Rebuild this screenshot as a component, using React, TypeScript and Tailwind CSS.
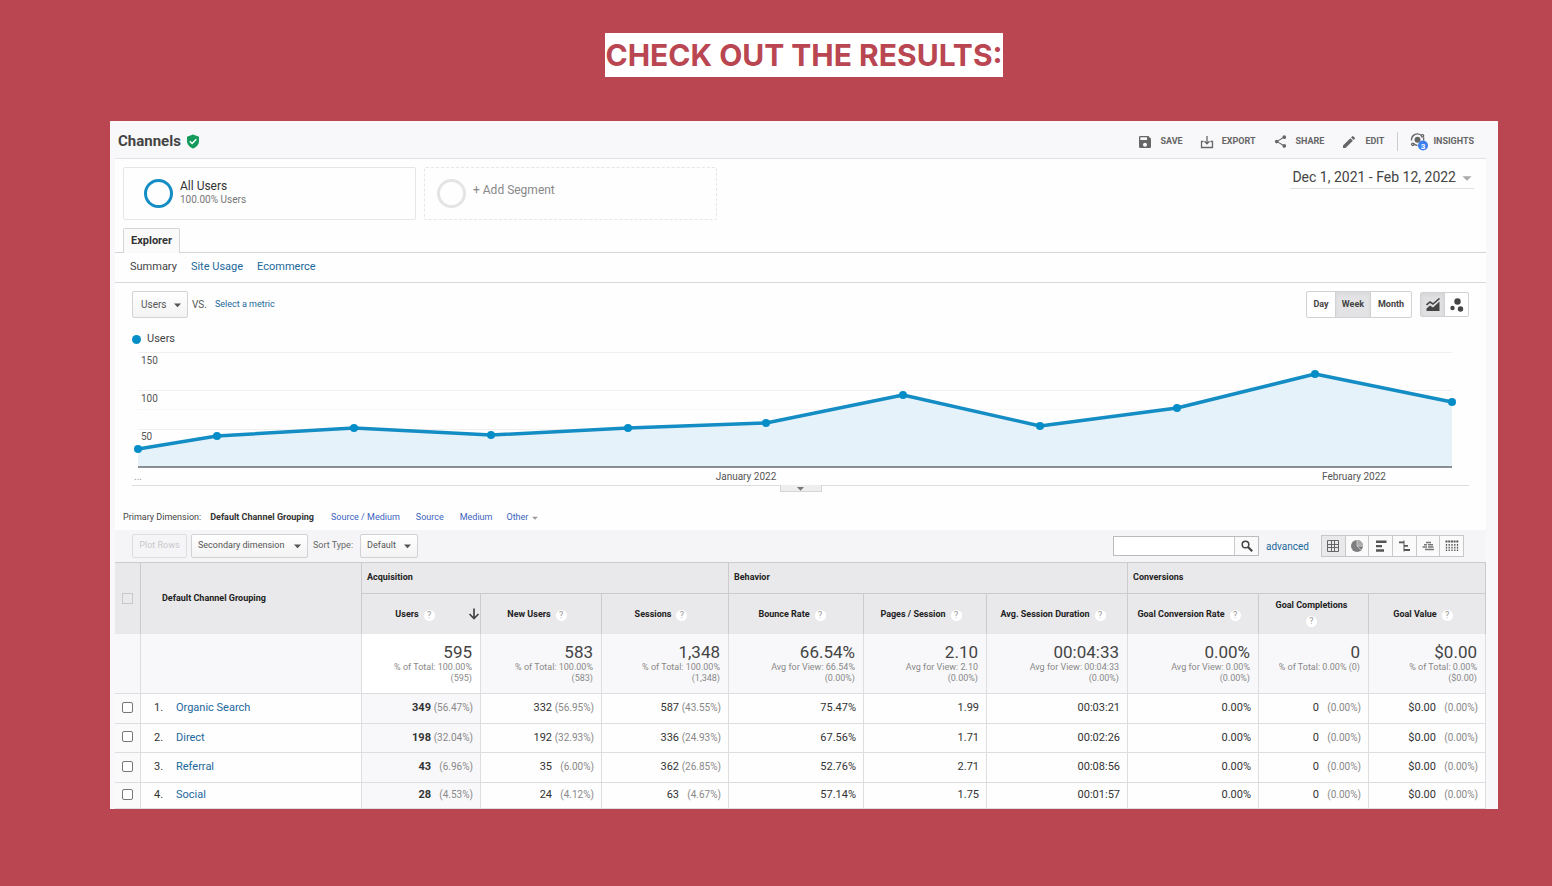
import type { ReactNode } from 'react';
import { MdSave, MdShare, MdEdit, MdArrowDropDown } from 'react-icons/md';

const points = [
  [6, 101], [85, 88], [222, 80], [359, 87], [496, 80], [634, 75],
  [771, 47], [908, 78], [1045, 60], [1183, 26], [1320, 54],
];
const line = points.map((p) => p.join(',')).join(' ');

const columns = [
  { label: 'Users', total: '595', note: '% of Total: 100.00%', sub: '(595)', sorted: true },
  { label: 'New Users', total: '583', note: '% of Total: 100.00%', sub: '(583)' },
  { label: 'Sessions', total: '1,348', note: '% of Total: 100.00%', sub: '(1,348)' },
  { label: 'Bounce Rate', total: '66.54%', note: 'Avg for View: 66.54%', sub: '(0.00%)' },
  { label: 'Pages / Session', total: '2.10', note: 'Avg for View: 2.10', sub: '(0.00%)' },
  { label: 'Avg. Session Duration', total: '00:04:33', note: 'Avg for View: 00:04:33', sub: '(0.00%)' },
  { label: 'Goal Conversion Rate', total: '0.00%', note: 'Avg for View: 0.00%', sub: '(0.00%)' },
  { label: 'Goal Completions', total: '0', note: '% of Total: 0.00% (0)', sub: '', stacked: true },
  { label: 'Goal Value', total: '$0.00', note: '% of Total: 0.00%', sub: '($0.00)' },
];

// Each cell is [value] or [value, share of total]
const rows = [
  { name: 'Organic Search', cells: [['349', '(56.47%)'], ['332', '(56.95%)'], ['587', '(43.55%)'], ['75.47%'], ['1.99'], ['00:03:21'], ['0.00%'], ['0', '(0.00%)'], ['$0.00', '(0.00%)']] },
  { name: 'Direct', cells: [['198', '(32.04%)'], ['192', '(32.93%)'], ['336', '(24.93%)'], ['67.56%'], ['1.71'], ['00:02:26'], ['0.00%'], ['0', '(0.00%)'], ['$0.00', '(0.00%)']] },
  { name: 'Referral', cells: [['43', '(6.96%)'], ['35', '(6.00%)'], ['362', '(26.85%)'], ['52.76%'], ['2.71'], ['00:08:56'], ['0.00%'], ['0', '(0.00%)'], ['$0.00', '(0.00%)']] },
  { name: 'Social', cells: [['28', '(4.53%)'], ['24', '(4.12%)'], ['63', '(4.67%)'], ['57.14%'], ['1.75'], ['00:01:57'], ['0.00%'], ['0', '(0.00%)'], ['$0.00', '(0.00%)']] },
];

function ShieldIcon() {
  return (
    <svg width="14" height="15" viewBox="0 0 14 15" aria-hidden="true">
      <path d="M7 0.500 13 2.700V7c0 3.600-2.500 6.200-6 7.500C3.500 13.200 1 10.600 1 7V2.700Z" fill="#149a5b" />
      <path d="m3.800 7.300 2.300 2.200 4.200-4.200" fill="none" stroke="#fff" strokeWidth="1.500" />
    </svg>
  );
}

function ExportIcon() {
  return (
    <svg width="14" height="14" viewBox="0 0 14 14" fill="none" stroke="#666" strokeWidth="1.300" aria-hidden="true">
      <path d="M3.500 6.500H1.500v6h11v-6H10.500M7 1v7.500M4.500 6.300 7 8.800 9.500 6.300" />
    </svg>
  );
}

function InsightsIcon() {
  return (
    <svg width="19" height="19" viewBox="0 0 19 19" aria-hidden="true">
      <g fill="none" stroke="#666" strokeWidth="1.300">
        <path d="M1.500 8.500A6 6 0 0 1 11.200 3.200M3.800 11.800A6 6 0 0 0 7.500 13.500M13.500 5.500a6 6 0 0 1 0 3" />
        <circle cx="12.500" cy="3.800" r="1.200" />
        <circle cx="2.800" cy="12.300" r="1.200" />
      </g>
      <circle cx="7.500" cy="7.800" r="3" fill="#666" />
      <circle cx="13" cy="13.500" r="5" fill="#3b80ee" />
      <text x="13" y="16.500" textAnchor="middle" fontSize="8" fontWeight="700" fill="#fff">3</text>
    </svg>
  );
}

function SortIcon() {
  return (
    <svg width="12" height="12" viewBox="0 0 12 12" fill="none" stroke="#444" strokeWidth="1.700" aria-hidden="true">
      <path d="M6 0.500v9.500M1.500 6 6 10.500 10.500 6" />
    </svg>
  );
}

function SearchIcon() {
  return (
    <svg width="12" height="12" viewBox="0 0 12 12" fill="none" stroke="#444" aria-hidden="true">
      <circle cx="4.500" cy="4.500" r="3.300" strokeWidth="1.500" />
      <path d="m7 7 4.200 4.200" strokeWidth="2.200" />
    </svg>
  );
}

function ToolButton({ icon, label }: { icon: ReactNode; label: string }) {
  return (
    <button className="flex items-center gap-2 text-[9px] font-bold text-[#666]">
      {icon}
      {label}
    </button>
  );
}

function Dropdown({ id, label, value, className }: { id: string; label?: string; value: string; className: string }) {
  return (
    <div className="relative">
      <select
        id={id}
        aria-label={label}
        className={`appearance-none rounded-xs border border-[#d2d2d4] bg-linear-to-b from-white to-[#f3f3f4] text-[#555] ${className}`}
      >
        <option>{value}</option>
      </select>
      <MdArrowDropDown className="pointer-events-none absolute top-1/2 right-[2px] -translate-y-1/2 text-[#555]" size={17} />
    </div>
  );
}

function Help() {
  return (
    <span className="inline-flex size-[11px] shrink-0 items-center justify-center rounded-full bg-white text-[9px] leading-none font-normal text-[#999]">
      ?
    </span>
  );
}

const viewIcons = [
  {
    name: 'Data',
    icon: (
      <svg width="14" height="14" viewBox="0 0 14 14" fill="none" stroke="#666" aria-hidden="true">
        <path d="M1.500 1.500h11v11h-11zM1.500 5.500h11M1.500 8.500h11M5.500 1.500v11M8.500 1.500v11" />
      </svg>
    ),
  },
  {
    name: 'Percentage',
    icon: (
      <svg width="14" height="14" viewBox="0 0 14 14" aria-hidden="true">
        <circle cx="7" cy="7" r="6" fill="#7d7d80" />
        <path d="M7 7V1a6 6 0 0 1 6 6Z" fill="#a8a8aa" />
        <path d="M7 1v6h6M7 7l4 4" stroke="#ddd" strokeWidth="0.700" fill="none" />
      </svg>
    ),
  },
  {
    name: 'Performance',
    icon: (
      <svg width="14" height="14" viewBox="0 0 14 14" fill="#555" aria-hidden="true">
        <path d="M2 1.500h10.500v2.500H2zM2 6h6v2.200H2zM2 10.300h8v2.500H2z" />
      </svg>
    ),
  },
  {
    name: 'Comparison',
    icon: (
      <svg width="14" height="14" viewBox="0 0 14 14" fill="#555" aria-hidden="true">
        <path d="M6.500 1.500h1v11h-1zM2 2.500h5v1.800H2zM7 6h4v1.800H7zM7 10h6v2H7z" />
      </svg>
    ),
  },
  {
    name: 'Term Cloud',
    icon: (
      <svg width="14" height="14" viewBox="0 0 14 14" fill="none" stroke="#777" aria-hidden="true">
        <path d="M5 3.500h5M3 5.700h3M7 5.700h5M1.500 8h4.500M7 8h5.500M4 10.500h9" strokeWidth="1.400" />
      </svg>
    ),
  },
  {
    name: 'Pivot',
    icon: (
      <svg width="14" height="14" viewBox="0 0 14 14" fill="none" stroke="#555" aria-hidden="true">
        <path d="M0.500 2.500h13" strokeWidth="2" strokeDasharray="2 0.700" />
        <path d="M1.500 5v8M4.200 5v8M7 5v8M9.800 5v8M12.500 5v8" strokeWidth="1.300" strokeDasharray="1.700 1" />
      </svg>
    ),
  },
];

function Chart() {
  return (
    <svg viewBox="0 0 1337 137" className="block w-full" role="img" aria-label="Users per week">
      <path d="M6 4.500H1320M6 42.500H1320M6 81.500H1320" stroke="#f0f0f1" />
      <path d="M6 61.500H1320M6 100.500H1320" stroke="#f8f8f8" />
      <polygon points={`6,119 ${line} 1320,119`} fill="#e5f1fa" fillOpacity="0.950" />
      <path d="M6 119H1320" stroke="#666d72" strokeWidth="1.500" />
      <polyline points={line} fill="none" stroke="#138dc4" strokeWidth="3.500" strokeLinejoin="round" />
      {points.map(([x, y]) => (
        <circle key={x} cx={x} cy={y} r="4" fill="#058dc7" />
      ))}
      <g fontSize="10" fill="#555">
        <text x="9" y="16">150</text>
        <text x="9" y="54">100</text>
        <text x="9" y="92">50</text>
        <text x="2" y="132" fill="#999">...</text>
        <text x="614" y="132" textAnchor="middle">January 2022</text>
        <text x="1222" y="132" textAnchor="middle">February 2022</text>
      </g>
    </svg>
  );
}

function ReportTable() {
  return (
    <table className="w-full table-fixed border-separate border-spacing-0 text-[11px] text-[#333] [&_td]:border-r [&_td]:border-b [&_td]:border-[#e0dde0] [&_th]:border-r [&_th]:border-[#cccacd]">
      <colgroup>
        <col className="w-[26px]" />
        <col className="w-[221px]" />
        <col className="w-[119px]" />
        <col className="w-[121px]" />
        <col className="w-[127px]" />
        <col className="w-[135px]" />
        <col className="w-[123px]" />
        <col className="w-[141px]" />
        <col className="w-[131px]" />
        <col className="w-[110px]" />
        <col className="w-[117px]" />
      </colgroup>
      <thead className="bg-[#e9e8ea] text-[9px] text-[#222]">
        <tr className="h-8 text-left [&_th]:border-t [&_th]:border-t-[#cccacd]">
          <th rowSpan={2}>
            <input type="checkbox" disabled aria-label="Select all rows" className="mx-auto block size-[11px] appearance-none border border-[#c8c8ca]" />
          </th>
          <th rowSpan={2} className="pl-[21px] font-bold">Default Channel Grouping</th>
          <th colSpan={3} className="border-b pl-[5px] font-bold">Acquisition</th>
          <th colSpan={3} className="border-b pl-[5px] font-bold">Behavior</th>
          <th colSpan={3} className="border-b pl-[5px] font-bold">Conversions</th>
        </tr>
        <tr className="h-10">
          {columns.map((c) => (
            <th key={c.label} className="font-bold whitespace-nowrap">
              <div className="flex items-center">
                <div className={c.stacked ? 'flex flex-1 flex-col items-center gap-[3px] pr-1 pb-[2px]' : `flex flex-1 items-center justify-center gap-[5px] pt-[2px] ${c.sorted ? '' : 'pr-2'}`}>
                  {c.label}
                  <Help />
                </div>
                {c.sorted && <SortIcon />}
              </div>
            </th>
          ))}
        </tr>
      </thead>
      <tbody>
        <tr className="h-[60px] bg-[#f8f8fa]">
          <td />
          <td />
          {columns.map((c) => (
            <td key={c.label} className={`pt-2 pr-2 text-right align-top text-[9px] leading-[11px] whitespace-nowrap text-[#888] ${c.sorted ? 'bg-white' : ''}`}>
              <div className="text-[17px] leading-5 text-[#444]">{c.total}</div>
              <div>{c.note}</div>
              <div>{c.sub}</div>
            </td>
          ))}
        </tr>
        {rows.map((row, i) => (
          <tr key={row.name} className={i === rows.length - 1 ? 'h-[26px]' : 'even:h-[30px] odd:h-[29px]'}>
            <td className="bg-[#fafafb] py-0">
              <input type="checkbox" aria-label={`Select ${row.name}`} className="mx-auto mb-[3px] block size-[11px] appearance-none rounded-xs border border-[#777] bg-white" />
            </td>
            <td className="py-0">
              <div className="flex pl-[13px]">
                <span className="w-[22px]">{i + 1}.</span>
                <a href="#" className="text-[#21689c]">{row.name}</a>
              </div>
            </td>
            {row.cells.map(([value, share], j) => (
              <td key={j} className={`py-0 pr-[7px] ${j === 0 ? 'bg-[#f8f8fa]' : ''}`}>
                <div className="flex items-baseline justify-end">
                  <span className={j === 0 ? 'font-bold' : ''}>{value}</span>
                  {share && <span className="w-[42px] text-right text-[10px] text-[#888]">{share}</span>}
                </div>
              </td>
            ))}
          </tr>
        ))}
      </tbody>
    </table>
  );
}

export default function App() {
  return (
    <div className="min-h-screen bg-[#b94651] pt-[33px] pr-[54px] pb-[77px] pl-[110px] font-['Roboto',sans-serif]">
      <h2 className="text-center font-['Inter',sans-serif] text-[30px] leading-[44px] font-bold text-[#b94651]">
        <span className="inline-block bg-white">CHECK OUT THE RESULTS:</span>
      </h2>

      <main className="mt-11 bg-[#f8f8fa] pr-3 pl-[5px]">
        <header className="flex h-[37px] items-center justify-between pt-1 pr-3 pl-[3px]">
          <h1 className="flex items-center gap-[5px] text-[15px] font-bold text-[#444]">
            Channels
            <ShieldIcon />
          </h1>
          <div className="flex items-center gap-[17px]">
            <ToolButton icon={<MdSave size={16} />} label="SAVE" />
            <ToolButton icon={<ExportIcon />} label="EXPORT" />
            <ToolButton icon={<MdShare size={15} />} label="SHARE" />
            <ToolButton icon={<MdEdit size={16} />} label="EDIT" />
            <div className="-ml-1 flex items-center border-l border-[#ccc] pl-3">
              <button className="flex items-center gap-1 text-[9px] font-bold text-[#666]">
                <InsightsIcon />
                INSIGHTS
              </button>
            </div>
          </div>
        </header>

        <div className="border-t border-[#e2e2e4] bg-[#fefefe]">
          {/* Segments and date range */}
          <div className="flex items-start justify-between pt-2 pr-3 pl-2">
            <div className="flex gap-2">
              <button className="flex h-[53px] w-[293px] items-center gap-[7px] rounded-xs border border-[#e6e6e9] pl-5 text-left">
                <span className="size-[29px] rounded-full border-[3px] border-[#138dc4]" />
                <span className="pb-[2px]">
                  <span className="block text-[12px] leading-[14px] text-[#333]">All Users</span>
                  <span className="block text-[10px] leading-[14px] text-[#777]">100.00% Users</span>
                </span>
              </button>
              <button className="flex h-[53px] w-[293px] items-center gap-[7px] rounded-xs border border-dashed border-[#e6e6e9] pl-3 text-[12px] text-[#888]">
                <span className="size-[29px] rounded-full border-[3px] border-[#e4e4e7]" />
                <span className="pb-2">+ Add Segment</span>
              </button>
            </div>
            <button className="flex h-[22px] items-center border-b border-[#e2e2e4] pl-[2px] text-[14px] text-[#444]">
              Dec 1, 2021 - Feb 12, 2022
              <MdArrowDropDown size={22} className="-mr-1 text-[#aaa]" />
            </button>
          </div>

          <div className="mt-2 flex border-b border-[#d5d5d8] pl-2">
            <button className="-mb-px h-[25px] rounded-t-xs border border-b-0 border-[#d5d5d8] bg-[#fafafb] px-[7px] text-[11px] font-bold text-[#333]">
              Explorer
            </button>
          </div>
          <nav className="flex h-[30px] items-center gap-[14px] border-b border-[#d9d9dc] pl-[15px] text-[11px] text-[#21689c]">
            <span className="text-[#444]">Summary</span>
            <a href="#">Site Usage</a>
            <a href="#">Ecommerce</a>
          </nav>

          {/* Metric pickers and chart */}
          <div className="pr-[17px] pl-[17px]">
            <div className="flex items-center justify-between pt-2">
              <div className="flex items-center gap-1 text-[10px] text-[#555]">
                <Dropdown id="metric" label="Metric" value="Users" className="h-[27px] w-14 pl-2" />
                <span>VS.</span>
                <a href="#" className="ml-1 text-[9px] text-[#21689c]">Select a metric</a>
              </div>
              <div className="flex items-center gap-2 text-[#444]">
                <div className="flex h-[27px] divide-x divide-[#d2d2d4] rounded-xs border border-[#d2d2d4] text-[9px] font-bold">
                  <button className="w-[29px]">Day</button>
                  <button className="w-[35px] bg-[#e3e3e5] inset-shadow-sm">Week</button>
                  <button className="w-10">Month</button>
                </div>
                <div className="flex h-[25px] divide-x divide-[#d2d2d4] rounded-xs border border-[#d2d2d4]">
                  <button aria-label="Line chart" className="w-6 bg-[#e0e0e2] inset-shadow-sm">
                    <svg className="mx-auto" width="14" height="14" viewBox="0 0 14 14" aria-hidden="true">
                      <path d="M0.500 7 4 4l3 2 6.500-5.500" fill="none" stroke="#444" strokeWidth="1.600" />
                      <path d="M0.500 13v-2.500L4 7.500 7 9.500l6.500-6V13Z" fill="#444" />
                    </svg>
                  </button>
                  <button aria-label="Motion chart" className="w-[23px]">
                    <svg className="mx-auto" width="14" height="14" viewBox="0 0 14 14" fill="#444" aria-hidden="true">
                      <circle cx="7.500" cy="3.500" r="3.200" />
                      <circle cx="2.500" cy="10" r="2.200" />
                      <circle cx="10.500" cy="11" r="2.700" />
                    </svg>
                  </button>
                </div>
              </div>
            </div>
            <div className="flex h-[30px] items-center gap-[6px] pt-3 text-[11px] text-[#444]">
              <span className="size-[9px] rounded-full bg-[#058dc7]" />
              Users
            </div>
            <div className="relative border-b border-[#dedee0]">
              <Chart />
              <button aria-label="Collapse chart" className="absolute top-full left-1/2 flex h-[7px] w-[42px] -translate-x-1/2 items-center justify-center border border-t-0 border-[#d5d5d8] bg-[#eee]">
                <MdArrowDropDown size={17} className="shrink-0 text-[#777]" />
              </button>
            </div>
          </div>

          <div className="mt-5 flex h-6 items-center pl-2 text-[9px] text-[#3c63bd]">
            <span className="text-[#444]">Primary Dimension:</span>
            <span className="ml-[9px] font-bold text-[#333]">Default Channel Grouping</span>
            <a href="#" className="ml-[17px]">Source / Medium</a>
            <a href="#" className="ml-4">Source</a>
            <a href="#" className="ml-4">Medium</a>
            <button className="ml-[14px] flex items-center">
              Other
              <MdArrowDropDown size={14} className="text-[#999]" />
            </button>
          </div>

          {/* Table toolbar */}
          <div className="flex h-8 items-center justify-between bg-[#f5f5f7] pr-[22px] pl-[17px] text-[9px] text-[#666]">
            <div className="flex items-center gap-1">
              <button disabled className="h-6 w-[55px] rounded-xs border border-[#dedee0] text-[#c8c8ca]">Plot Rows</button>
              <Dropdown id="secondary" label="Secondary dimension" value="Secondary dimension" className="h-6 w-[117px] pl-[6px]" />
              <label htmlFor="sort-type" className="mr-[3px] ml-px">Sort Type:</label>
              <Dropdown id="sort-type" value="Default" className="h-6 w-[58px] pl-[6px]" />
            </div>
            <div className="flex items-center">
              <form className="flex h-5 w-[146px] border border-[#bbb] bg-white">
                <input type="text" aria-label="Search table" className="min-w-0 flex-1 px-1 outline-none" />
                <button type="button" aria-label="Search" className="flex w-6 items-center justify-center border-l border-[#ccc] bg-[#fafafa]">
                  <SearchIcon />
                </button>
              </form>
              <a href="#" className="ml-[7px] text-[10px] text-[#21689c]">advanced</a>
              <div className="ml-3 flex h-[22px] w-[143px] divide-x divide-[#c8c8ca] border border-[#c8c8ca] bg-[#fafafa]">
                {viewIcons.map((v) => (
                  <button key={v.name} aria-label={v.name} className="flex flex-1 items-center justify-center first:bg-[#e9e9eb]">
                    {v.icon}
                  </button>
                ))}
              </div>
            </div>
          </div>

          <ReportTable />
        </div>
      </main>
    </div>
  );
}
